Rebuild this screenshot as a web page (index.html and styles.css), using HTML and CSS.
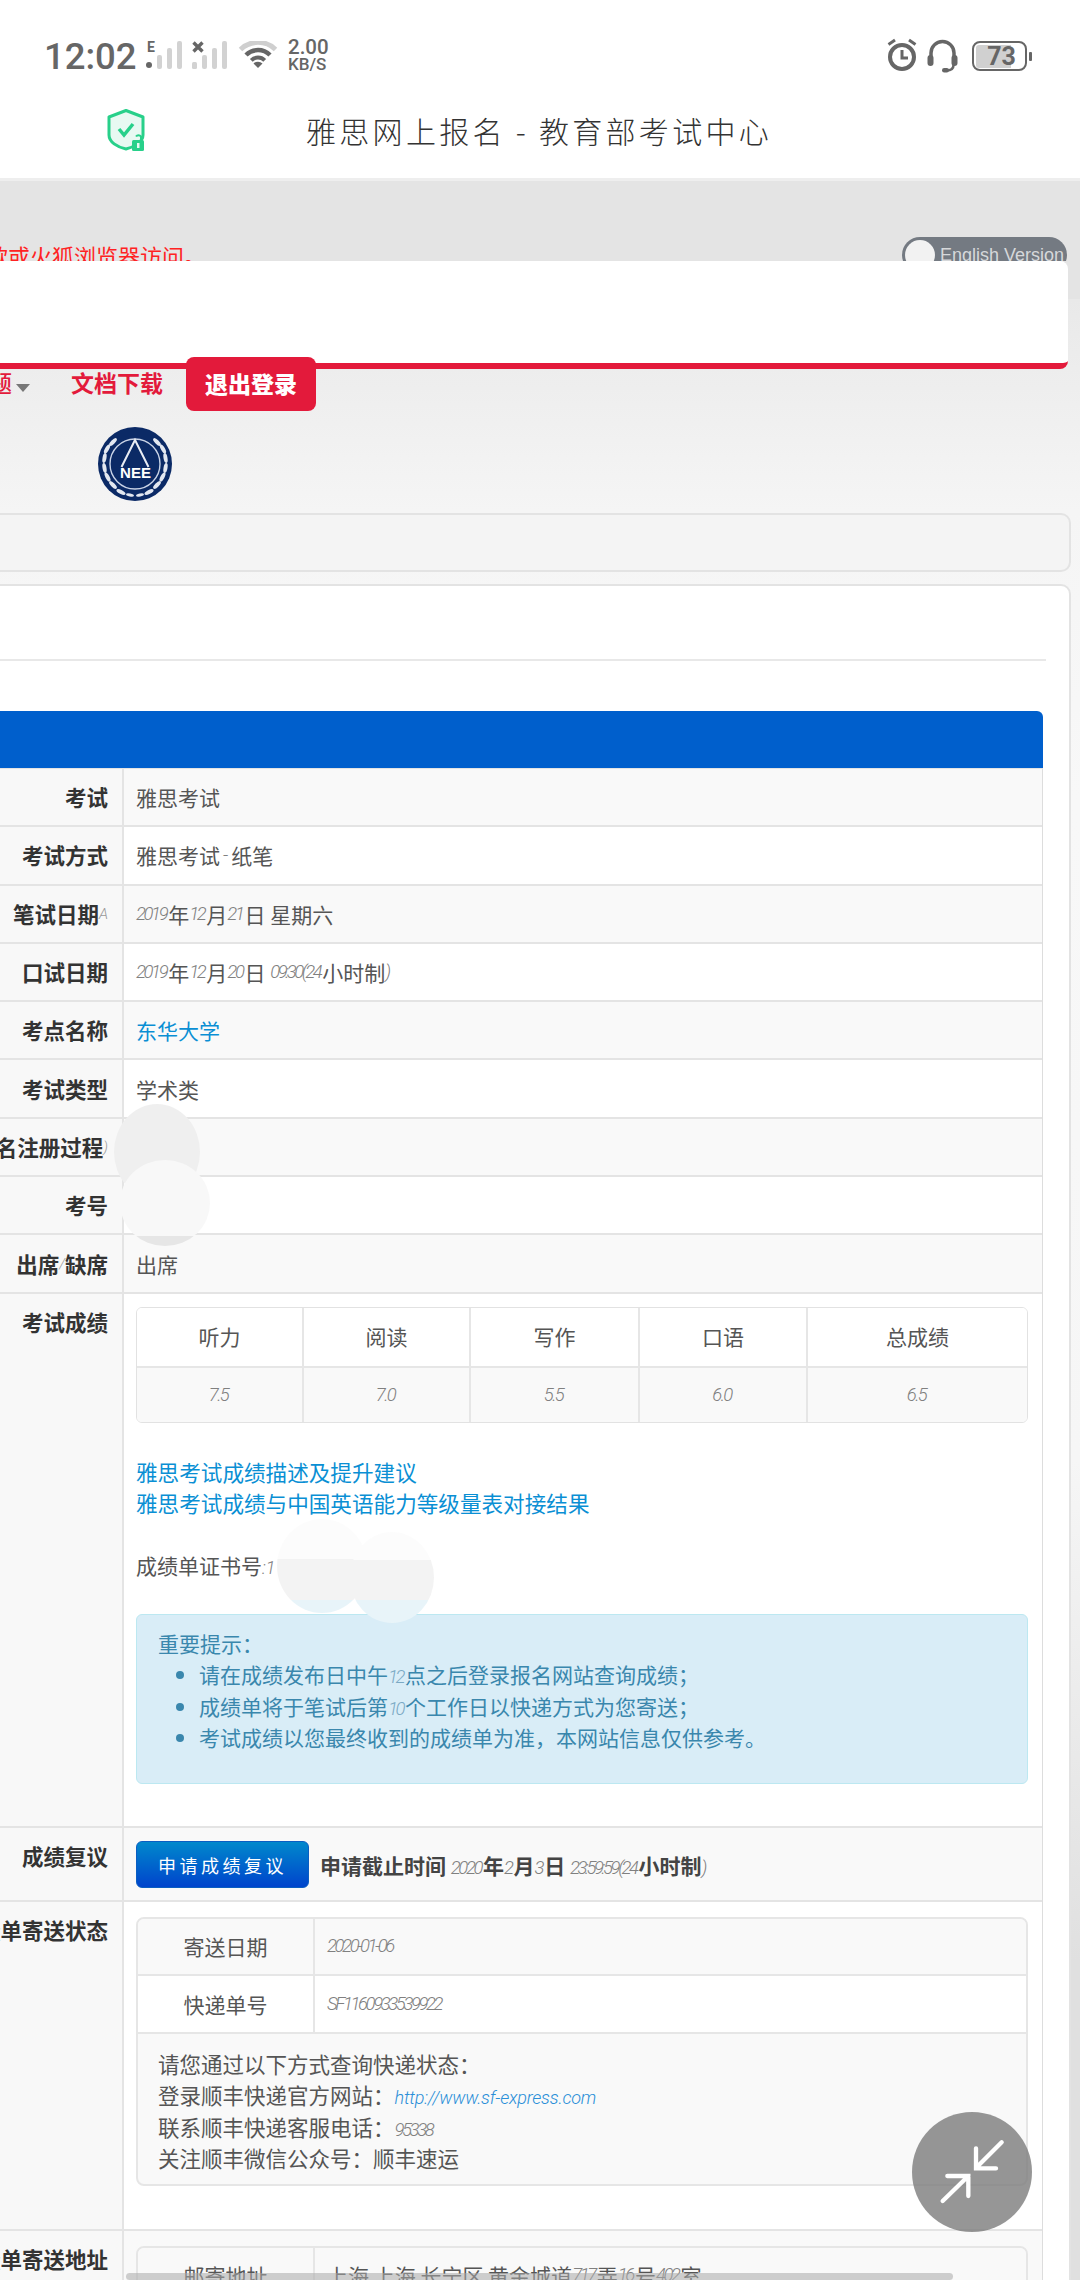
FILE: index.html
```html
<!DOCTYPE html>
<html lang="zh-CN">
<head>
<meta charset="utf-8">
<title>雅思网上报名 - 教育部考试中心</title>
<link rel="stylesheet" href="styles.css">
</head>
<body>
<div class="screen">
  <header class="statusbar">
    <div class="status-left">
      <span class="clock">12:02</span>
      <svg class="sig1" width="36" height="28" viewBox="0 0 36 28"><text x="1" y="11" class="sig-e">E</text><circle cx="3" cy="24" r="3" fill="#666"/><rect x="11" y="14" width="5" height="14" rx="2" fill="#d2d2d2"/><rect x="21" y="7" width="5" height="21" rx="2" fill="#d2d2d2"/><rect x="31" y="0" width="5" height="28" rx="2" fill="#d2d2d2"/></svg>
      <svg class="sig2" width="35" height="28" viewBox="0 0 35 28"><path d="M1.5 1.5l9 9M10.500 1.500l-9 9" stroke="#666" stroke-width="3.400"/><rect x="0" y="21" width="5" height="7" rx="1.500" fill="#d2d2d2"/><rect x="10" y="14" width="5" height="14" rx="2" fill="#d2d2d2"/><rect x="20" y="7" width="5" height="21" rx="2" fill="#d2d2d2"/><rect x="30" y="0" width="5" height="28" rx="2" fill="#d2d2d2"/></svg>
      <svg class="wifi" width="40" height="28" viewBox="0 0 40 28" fill="none"><path d="M2.500 8.500A25 25 0 0 1 37.500 8.500" stroke="#cfcfcf" stroke-width="5"/><path d="M8 14A17 17 0 0 1 32 14" stroke="#666" stroke-width="4.500"/><path d="M13.300 19.300A9.500 9.500 0 0 1 26.700 19.300" stroke="#666" stroke-width="4"/><path d="M20 27L15.500 22.500A6.400 6.400 0 0 1 24.500 22.500Z" fill="#666"/></svg>
      <div class="speed"><span class="speed-num">2.00</span><span class="speed-unit">KB/S</span></div>
    </div>
    <div class="status-right">
      <svg width="30" height="33" viewBox="0 0 30 33" fill="none" stroke="#666"><circle cx="15" cy="19" r="12" stroke-width="4"/><path d="M15 12v8h6" stroke-width="3"/><path d="M1.500 6.500L8 2M28.500 6.500L22 2" stroke-width="3"/></svg>
      <svg width="31" height="35" viewBox="0 0 31 35" fill="none"><path d="M4 21V15A11.500 11.500 0 0 1 27 15V21" stroke="#666" stroke-width="3.500"/><rect x="0.500" y="17" width="6" height="11" rx="3" fill="#666"/><rect x="24.500" y="17" width="6" height="11" rx="3" fill="#666"/><path d="M26.500 27c0 4-3 5.500-7 5.500" stroke="#666" stroke-width="2.500"/><rect x="15" y="30" width="7" height="4.500" rx="2.200" fill="#666"/></svg>
      <div class="battery"><div class="battery-body"><span class="battery-fill"></span><span class="battery-num">73</span></div><span class="battery-nub"></span></div>
    </div>
  </header>

  <div class="titlebar">
    <svg class="shield" width="39" height="42" viewBox="0 0 39 42"><path d="M19 1.500L36 8V26C36 33 27 38 19 40C10 38 2 33 2 26V8Z" fill="#e8f9f2" stroke="#28d08a" stroke-width="3" stroke-linejoin="round"/><path d="M12 20l5 6 9-11" fill="none" stroke="#28d08a" stroke-width="3.500"/><rect x="25" y="31" width="12" height="11" rx="1.500" fill="#28d08a"/><path d="M34 31v-3.500a3 3 0 0 0-5 0" fill="none" stroke="#28d08a" stroke-width="2"/><rect x="30" y="34" width="2.500" height="5" fill="#e8f9f2"/></svg>
    <h1 class="page-title">雅思网上报名 - 教育部考试中心</h1>
  </div>

  <div class="page">
    <div class="topline">
      <div class="notice"><span>请使用谷歌或火狐浏览器访问。</span></div>
      <div class="lang-toggle"><span class="knob"></span><span class="lang-text">English Version</span></div>
    </div>
    <div class="whitebar"></div>
    <nav class="nav">
      <span class="nav-cut">题</span><span class="caret"></span>
      <a class="nav-link">文档下载</a>
      <a class="nav-btn">退出登录</a>
    </nav>
    <svg class="logo" width="74" height="74" viewBox="0 0 74 74">
      <circle cx="37" cy="37" r="37" fill="#0b2a66"/>
      <circle cx="37" cy="37" r="25" fill="none" stroke="#c9d3e6" stroke-width="1.400"/>
      <g fill="#e3e8f1">
        <ellipse cx="15" cy="15" rx="5" ry="2" transform="rotate(-45 15 15)"/><ellipse cx="9" cy="22" rx="5" ry="2" transform="rotate(-60 9 22)"/><ellipse cx="6.500" cy="31" rx="5" ry="2" transform="rotate(-80 6.500 31)"/><ellipse cx="6.500" cy="41" rx="5" ry="2" transform="rotate(80 6.500 41)"/><ellipse cx="9.500" cy="50" rx="5" ry="2" transform="rotate(62 9.500 50)"/><ellipse cx="15" cy="58" rx="5" ry="2" transform="rotate(45 15 58)"/><ellipse cx="23" cy="65" rx="5" ry="2" transform="rotate(28 23 65)"/><ellipse cx="32" cy="68" rx="4" ry="1.500" transform="rotate(12 32 68)"/>
        <ellipse cx="59" cy="15" rx="5" ry="2" transform="rotate(45 59 15)"/><ellipse cx="65" cy="22" rx="5" ry="2" transform="rotate(60 65 22)"/><ellipse cx="67.500" cy="31" rx="5" ry="2" transform="rotate(80 67.500 31)"/><ellipse cx="67.500" cy="41" rx="5" ry="2" transform="rotate(-80 67.500 41)"/><ellipse cx="64.500" cy="50" rx="5" ry="2" transform="rotate(-62 64.500 50)"/><ellipse cx="59" cy="58" rx="5" ry="2" transform="rotate(-45 59 58)"/><ellipse cx="51" cy="65" rx="5" ry="2" transform="rotate(-28 51 65)"/><ellipse cx="42" cy="68" rx="4" ry="1.500" transform="rotate(-12 42 68)"/>
      </g>
      <path d="M23.500 40L37 13L50.500 40" fill="none" stroke="#e9edf4" stroke-width="2"/>
      <text x="37.500" y="51" class="logo-text">NEE</text>
    </svg>

    <div class="panel-strip"></div>

    <section class="panel">
      <div class="panel-rule"></div>
      <div class="bluebar"></div>
      <div class="info">
        <div class="row odd"><div class="key"><b>考试</b></div><div class="val">雅思考试</div></div>
        <div class="row"><div class="key"><b>考试方式</b></div><div class="val">雅思考试<span class="n dash">-</span>纸笔</div></div>
        <div class="row odd"><div class="key"><b>笔试日期</b><span class="n tiny">A</span></div><div class="val"><span class="n">2019</span>年<span class="n">12</span>月<span class="n">21</span>日 星期六</div></div>
        <div class="row"><div class="key"><b>口试日期</b></div><div class="val"><span class="n">2019</span>年<span class="n">12</span>月<span class="n">20</span>日 <span class="n">09:30(24</span>小时制<span class="n">)</span></div></div>
        <div class="row odd"><div class="key"><b>考点名称</b></div><div class="val"><a class="link">东华大学</a></div></div>
        <div class="row"><div class="key"><b>考试类型</b></div><div class="val">学术类</div></div>
        <div class="row odd"><div class="key"><b>报名注册过程</b><span class="n tiny">)</span></div><div class="val"></div></div>
        <div class="row"><div class="key"><b>考号</b></div><div class="val"></div></div>
        <div class="row odd"><div class="key"><b>出席</b><span class="n tiny">/</span><b>缺席</b></div><div class="val">出席</div></div>

        <div class="row tall score-row">
          <div class="key top"><b>考试成绩</b></div>
          <div class="val block">
            <div class="scores">
              <div class="cell">听力</div><div class="cell">阅读</div><div class="cell">写作</div><div class="cell">口语</div><div class="cell">总成绩</div>
              <div class="cell alt"><span class="n">7.5</span></div><div class="cell alt"><span class="n">7.0</span></div><div class="cell alt"><span class="n">5.5</span></div><div class="cell alt"><span class="n">6.0</span></div><div class="cell alt"><span class="n">6.5</span></div>
            </div>
            <div class="links"><a class="link">雅思考试成绩描述及提升建议</a><a class="link">雅思考试成绩与中国英语能力等级量表对接结果</a></div>
            <div class="cert">成绩单证书号<span class="n">: 1</span></div>
            <div class="alert">
              <p>重要提示：</p>
              <ul>
                <li>请在成绩发布日中午<span class="n">12</span>点之后登录报名网站查询成绩；</li>
                <li>成绩单将于笔试后第<span class="n">10</span>个工作日以快递方式为您寄送；</li>
                <li>考试成绩以您最终收到的成绩单为准，本网站信息仅供参考。</li>
              </ul>
            </div>
          </div>
        </div>

        <div class="row odd review-row">
          <div class="key top"><b>成绩复议</b></div>
          <div class="val review">
            <a class="apply">申请成绩复议</a>
            <span class="deadline">申请截止时间 <span class="n">2020</span>年<span class="n">2</span>月<span class="n">3</span>日 <span class="n">23:59:59(24</span>小时制<span class="n">)</span></span>
          </div>
        </div>

        <div class="row tall ship-row">
          <div class="key top"><b>成绩单寄送状态</b></div>
          <div class="val block">
            <div class="sub">
              <div class="sub-row odd"><div class="sub-key">寄送日期</div><div class="sub-val"><span class="n">2020-01-06</span></div></div>
              <div class="sub-row"><div class="sub-key">快递单号</div><div class="sub-val"><span class="n">SF1160933539922</span></div></div>
              <div class="sub-note">
                <p>请您通过以下方式查询快递状态：</p>
                <p>登录顺丰快递官方网站：<a class="n url">http://www.sf-express.com</a></p>
                <p>联系顺丰快递客服电话：<span class="n">95338</span></p>
                <p>关注顺丰微信公众号：顺丰速运</p>
              </div>
            </div>
          </div>
        </div>

        <div class="row odd addr-row">
          <div class="key top"><b>成绩单寄送地址</b></div>
          <div class="val block">
            <div class="sub">
              <div class="sub-row odd"><div class="sub-key">邮寄地址</div><div class="sub-val">上海 上海 长宁区 黄金城道<span class="n">717</span>弄<span class="n">16</span>号<span class="n">402</span>室</div></div>
            </div>
          </div>
        </div>
      </div>
    </section>
  </div>

  <div class="blob blob-a"></div>
  <div class="blob blob-b"></div>
  <div class="blob blob-c"></div>
  <div class="blob blob-d"></div>
  <div class="hscroll"></div>
  <button class="fab" aria-label="缩小"><svg width="120" height="120" viewBox="0 0 360 360" fill="none" stroke="#fff" stroke-width="13" stroke-linecap="round"><path d="M269 91L194 166M192 109V169H252M92 267L169 192M106 192H169V252"/></svg></button>
</div>
</body>
</html>
```
FILE: styles.css
```css
* { box-sizing: border-box; }
html, body { margin: 0; padding: 0; }
body { width: 1080px; height: 2280px; overflow: hidden; background: #fff; font-family: "Noto Sans CJK SC", "Noto Sans", sans-serif; color: #555; font-size: 21px; }
p, ul, h1 { margin: 0; padding: 0; }
a { text-decoration: none; }
.screen { position: relative; width: 1080px; height: 2280px; overflow: hidden; }

.statusbar { height: 100px; display: flex; justify-content: space-between; align-items: flex-start; padding: 38px 48px 0 44px; color: #666; font-family: Roboto, sans-serif; }
.status-left, .status-right { display: flex; align-items: flex-start; }
.clock { font-size: 36.5px; font-weight: 500; line-height: 36px; margin-top: 1px; width: 102px; }
.sig1 { margin-top: 3px; margin-right: 10px; }
.sig-e { font: 700 14px Roboto, sans-serif; fill: #666; }
.sig2 { margin-top: 3px; margin-right: 11px; }
.wifi { margin-top: 3px; margin-right: 10px; }
.speed { display: flex; flex-direction: column; font-weight: 500; margin-top: -1px; }
.speed-num { font-size: 20.500px; line-height: 20px; }
.speed-unit { font-size: 17px; line-height: 15px; }
.status-right { gap: 10px; }
.status-right svg { display: block; }
.battery { display: flex; align-items: center; gap: 2px; margin-top: 3px; margin-left: 4px; }
.battery-body { position: relative; width: 55px; height: 30px; border: 2.500px solid #666; border-radius: 8px; display: flex; align-items: center; justify-content: center; }
.battery-fill { position: absolute; left: 2px; top: 1.500px; bottom: 1.500px; width: 35px; background: #d0d0d0; border-radius: 3px 0 0 3px; }
.battery-num { position: relative; font-size: 25px; font-weight: 700; line-height: 1; margin-left: 4px; }
.battery-nub { width: 3px; height: 9px; background: #666; border-radius: 1px; }

.titlebar { height: 81px; display: flex; align-items: flex-start; padding: 9px 0 0 107px; background: #fff; border-bottom: 3px solid #eee; }
.shield { display: block; flex: none; }
.page-title { margin-left: 160px; font-size: 30px; font-weight: 300; letter-spacing: 3.300px; line-height: 42px; color: #333; white-space: nowrap; }

.page { height: 2099px; overflow: hidden; background: linear-gradient(to bottom, #e4e4e4 0, #e4e4e4 118px, #e9e9e9 118px, #f5f5f5 330px, #f8f8f8 620px, #f6f6f6 1280px, #e0e0e0 1780px); }
.topline { height: 80px; display: flex; justify-content: space-between; overflow: hidden; padding-right: 13px; }
.notice { width: 206px; display: flex; justify-content: flex-end; white-space: nowrap; color: #f22; font-size: 22px; line-height: 30px; padding-top: 59px; }
.lang-toggle { margin-top: 56px; width: 165px; height: 36px; border-radius: 18px; background: #747a82; display: flex; align-items: center; padding-left: 3px; gap: 5px; }
.knob { width: 30px; height: 30px; border-radius: 50%; background: #f2f2f2; flex: none; }
.lang-text { font-family: "Liberation Sans", sans-serif; font-size: 18px; color: #d6d8da; white-space: nowrap; }
.whitebar { height: 108px; width: 1068px; background: #fff; border-bottom: 6px solid #e31a3b; border-radius: 0 8px 8px 0; }
.nav { position: relative; margin-top: -12px; height: 54px; display: flex; align-items: center; color: #e31a3b; font-size: 23px; font-weight: 700; white-space: nowrap; }
.nav-cut { margin-left: -11px; width: 23px; flex: none; font-weight: 500; padding-bottom: 4px; }
.caret { width: 0; height: 0; border: 7px solid transparent; border-top: 8px solid #777; border-bottom: 0; margin: 8px 0 0 4px; flex: none; }
.nav-link { margin-left: 41px; color: #e31a3b; padding-bottom: 4px; }
.nav-btn { margin-left: 23px; width: 130px; height: 54px; padding-bottom: 3px; background: #e31a3b; color: #fff; border-radius: 8px; display: flex; align-items: center; justify-content: center; font-weight: 900; font-size: 23px; }
.logo { display: block; margin: 16px 0 12px 98px; }
.logo-text { font: 700 15px "Liberation Sans Narrow", "Liberation Sans", sans-serif; fill: #fff; text-anchor: middle; }

.panel-strip { height: 59px; width: 1081px; margin-left: -10px; border: 2px solid #e3e3e3; border-radius: 10px; background: #f4f4f4; }
.panel { margin: 12px 0 0 -10px; width: 1081px; height: 1700px; background: #fff; border: 2px solid #e3e3e3; border-radius: 10px 10px 0 0; padding: 0 26px 0 8px; }
.panel-rule { height: 75px; margin-right: -3px; border-bottom: 2px solid #e8e8e8; }
.bluebar { margin-top: 50px; height: 57px; background: #005fcc; border-radius: 0 6px 0 0; }
.info { border-right: 1px solid #ddd; border-top: 1px solid #e4e4e4; }
.row { display: flex; height: 58.300px; border-bottom: 2px solid #e4e4e4; background: #fff; line-height: 30px; }
.row.odd { background: #f9f9f9; }
.key { width: 124px; flex: none; display: flex; align-items: center; justify-content: flex-end; overflow: hidden; white-space: nowrap; padding-right: 14px; background: #f8f8f8; border-right: 2px solid #e4e4e4; color: #333; font-size: 21.500px; }
.key.top { align-items: flex-start; padding-top: 13px; }
.val { flex: 1; min-width: 0; display: flex; align-items: center; padding-left: 12px; white-space: pre; }
.val.block { display: block; padding: 13px 14px 0 12px; white-space: normal; }
.n { font-family: Roboto, sans-serif; font-weight: 300; font-style: italic; font-size: 18.500px; line-height: 0; letter-spacing: -2.400px; color: #808080; padding: 0 2px 0 0; }
.n.tiny { font-size: 15px; letter-spacing: 0; color: #999; padding: 0; }
.n.dash { padding: 0 3px; letter-spacing: 0; }
.link { color: #0a8fd4; }

.score-row { height: 534.300px; }
.scores { display: grid; grid-template-columns: 167px 167px 169px 168px 1fr; height: 116px; grid-auto-rows: 58px; border: 1px solid #e2e2e2; border-radius: 6px; overflow: hidden; }
.cell { display: flex; align-items: center; justify-content: center; padding-bottom: 2px; border-right: 2px solid #e6e6e6; background: #fff; }
.cell:nth-child(5n) { border-right: 0; }
.cell.alt { background: #f9f9f9; border-top: 2px solid #e6e6e6; }
.cell.alt .n { letter-spacing: -1.600px; }
.links { margin-top: 33px; line-height: 31px; font-size: 21.600px; display: flex; flex-direction: column; }
.cert { margin-top: 32px; line-height: 31px; }
.alert { margin-top: 33px; height: 170px; padding: 13px 21px; background: #d9edf7; border: 1px solid #bce8f1; border-radius: 6px; color: #3a87ad; line-height: 31.500px; }
.alert ul { padding-left: 41px; }
.alert .n { color: #7aa9c4; }

.review-row { height: 74px; }
.review { padding-top: 2px; }
.apply { width: 173px; height: 47px; flex: none; background: linear-gradient(to bottom, #0088cc, #0044cc); border: 1px solid #0a5ec2; border-radius: 6px; color: #fff; font-size: 18px; letter-spacing: 3.500px; display: flex; align-items: center; justify-content: center; }
.deadline { margin-left: 11px; color: #444; font-weight: 700; }
.deadline .n { font-weight: 300; }

.ship-row { height: 329px; }
.ship-row .val.block, .addr-row .val.block { padding-top: 15px; }
.sub { border: 2px solid #e6e6e6; border-radius: 8px; height: 269px; background: #f9f9f9; overflow: hidden; }
.sub-row { display: flex; height: 58px; border-bottom: 2px solid #e6e6e6; background: #fff; }
.sub-row.odd { background: #f9f9f9; height: 57px; }
.sub-key { width: 177px; flex: none; display: flex; align-items: center; justify-content: center; border-right: 2px solid #e6e6e6; }
.sub-val { flex: 1; display: flex; align-items: center; padding-left: 12px; white-space: pre; }
.sub-note { padding: 14px 20px; line-height: 31.500px; font-size: 21.500px; }
.url { color: #2a8fd8; letter-spacing: -0.200px; font-size: 18px; }
.addr-row { height: 60px; }

.blob { position: absolute; border-radius: 50%; }
.blob-a { left: 114px; top: 1104px; width: 86px; height: 96px; background: linear-gradient(to bottom, #efefef 0, #efefef 86%, #f7f7f7 86%); }
.blob-b { left: 120px; top: 1160px; width: 90px; height: 86px; background: linear-gradient(to bottom, #f8f8f8 0, #f8f8f8 88%, #e6e6e6 88%); }
.blob-c { left: 277px; top: 1519px; width: 90px; height: 94px; background: linear-gradient(to bottom, #fcfcfc 0, #fcfcfc 43%, #f3f3f3 43%, #f3f3f3 86%, #e8f4f9 86%); }
.blob-d { left: 350px; top: 1532px; width: 84px; height: 91px; background: linear-gradient(to bottom, #fcfcfc 0, #fcfcfc 31%, #f3f3f3 31%, #f3f3f3 75%, #e8f4f9 75%); }
.hscroll { position: absolute; left: 126px; top: 2273px; width: 827px; height: 7px; border-radius: 4px; background: rgba(170, 170, 170, .55); }
.fab { position: absolute; left: 912px; top: 2112px; width: 120px; height: 120px; padding: 0; border: 0; border-radius: 50%; background: rgba(120, 120, 120, .78); }
.fab svg { display: block; }
```
